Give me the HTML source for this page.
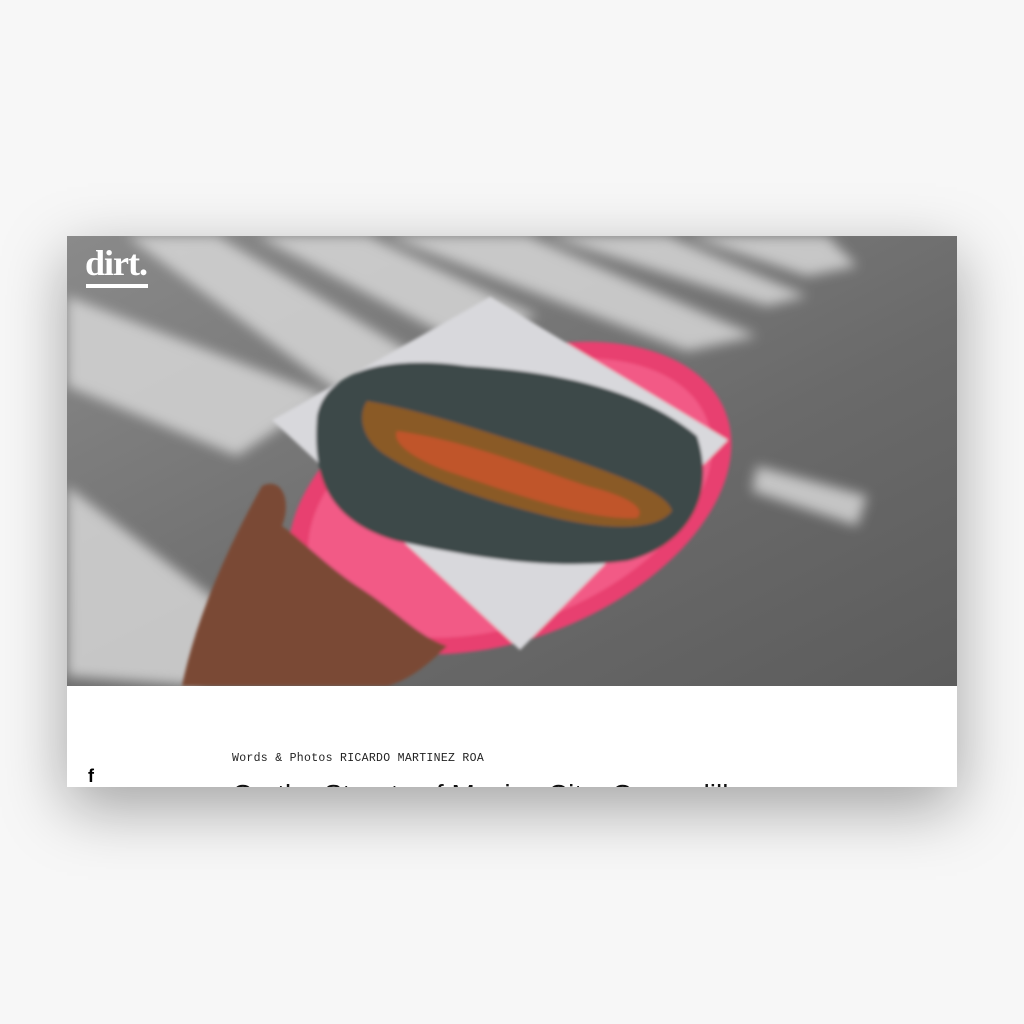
<!DOCTYPE html>
<html><head><meta charset="utf-8"><style>
html,body{margin:0;padding:0;background:#f7f7f7;width:1024px;height:1024px;overflow:hidden}
.card{position:absolute;left:67px;top:236px;width:890px;height:551px;background:#fff;overflow:hidden;box-shadow:0 20px 60px rgba(0,0,0,.35)}
.photo{position:absolute;left:0;top:0;width:890px;height:450px}
.logo{position:absolute;left:18px;top:6px;color:#fff;font-family:"Liberation Serif",serif;font-weight:bold;font-size:36px;letter-spacing:-1px}
.logo-bar{position:absolute;left:19px;top:48px;width:62px;height:4px;background:#fff}
.by{position:absolute;left:165px;top:516px;font-family:"Liberation Mono",monospace;font-size:11.5px;color:#222;letter-spacing:.3px}
.fb{position:absolute;left:21px;top:530px;font-family:"Liberation Sans",sans-serif;font-weight:bold;font-size:18px;color:#000}
.title{position:absolute;left:165px;top:543px;font-family:"Liberation Sans",sans-serif;font-size:28px;color:#111;white-space:nowrap}
</style></head><body>
<div class="card">
<svg class="photo" viewBox="0 0 890 450" xmlns="http://www.w3.org/2000/svg">
<defs>
<filter id="b"><feGaussianBlur stdDeviation="6"/></filter>
<filter id="b2"><feGaussianBlur stdDeviation="1.5"/></filter>
<linearGradient id="asph" x1="0" y1="0" x2="1" y2="1"><stop offset="0" stop-color="#8a8a8a"/><stop offset=".6" stop-color="#6a6a6a"/><stop offset="1" stop-color="#5c5c5c"/></linearGradient>
</defs>
<rect width="890" height="450" fill="url(#asph)"/>
<g filter="url(#b)" fill="#d6d6d6" opacity=".85">
<polygon points="60,0 150,0 400,150 290,170"/>
<polygon points="190,0 300,0 470,80 400,110"/>
<polygon points="320,0 460,0 690,100 620,115"/>
<polygon points="480,0 600,0 740,60 700,70"/>
<polygon points="620,0 760,0 790,30 740,40"/>
<polygon points="0,60 0,150 170,220 260,160"/>
<polygon points="0,250 0,440 130,450 170,380"/>
<polygon points="690,230 800,260 790,290 685,255"/>
</g>
<g filter="url(#b2)">
<ellipse cx="443" cy="262" rx="232" ry="140" transform="rotate(-22 443 262)" fill="#e8406f"/>
<ellipse cx="443" cy="262" rx="212" ry="124" transform="rotate(-22 443 262)" fill="#f25a86"/>
<polygon points="205,184 423,61 661,204 453,414" fill="#d8d8dc"/>
<path d="M250,180 C260,130 330,120 400,130 C480,135 570,150 630,200 C650,260 620,310 560,325 C480,335 400,320 330,305 C260,285 245,240 250,180 Z" fill="#3d4a48"/>
<path d="M300,165 C360,175 430,200 480,215 C540,235 600,255 605,275 C590,295 540,295 480,280 C420,265 360,245 320,220 C295,205 290,180 300,165 Z" fill="#8a5a28"/>
<path d="M330,195 C400,205 460,230 520,250 C560,260 580,272 570,282 C520,285 440,255 380,235 C340,220 325,205 330,195 Z" fill="#c0542a"/>
<path d="M115,450 C125,400 150,330 195,250 C215,240 225,265 215,290 C230,300 260,330 290,350 C330,375 350,400 380,410 C360,430 340,445 320,450 Z" fill="#7a4a35"/>
</g>
</svg>
<div class="logo">dirt.</div>
<div class="logo-bar"></div>
<div class="by">Words &amp; Photos RICARDO MARTINEZ ROA</div>
<div class="fb">f</div>
<div class="title">On the Streets of Mexico City: Quesadillas</div>
</div>
</body></html>
